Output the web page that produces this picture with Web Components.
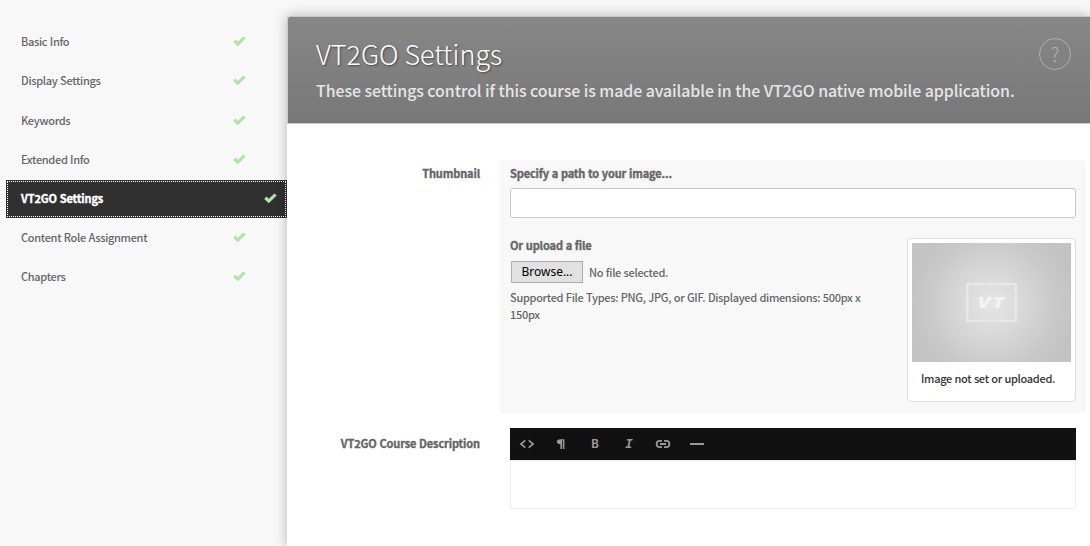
<!DOCTYPE html>
<html lang="en"><head><meta charset="utf-8"><title>VT2GO Settings</title>
<style>
body{margin:0;background:#f8f8f8;font-family:"Noto Sans CJK SC","Open Sans",sans-serif;font-size:11px;line-height:17px;color:#666;letter-spacing:-.31px;word-spacing:.4px;overflow:hidden}
</style></head><body>
<course-app></course-app>
<script>
const define=(name,html)=>{
  const t=document.createElement('template');t.innerHTML=html;
  customElements.define(name,class extends HTMLElement{
    constructor(){super();this.attachShadow({mode:'open'}).append(t.content.cloneNode(true));}
  });
};

define('check-mark',`<style>:host{display:block;width:13px;height:11px}svg{display:block}</style>
<svg width="13" height="11" viewBox="0 0 13 11"><path d="M0.2 5.9 2.5 3.6 4.8 5.8 10.5 0.4 12.7 2.5 4.8 10.3Z" fill="#b0e3a6"/></svg>`);

define('nav-item',`<style>
:host{display:flex;height:38px;padding:0 41px 0 15px;box-sizing:border-box;align-items:center;justify-content:space-between;font-weight:500;color:#666}
:host([active]){background:#303030;color:#fff;font-weight:700;letter-spacing:-.13px;-webkit-text-stroke:.35px #fff;padding-right:10px;outline:1px dotted #fff;outline-offset:-2px}
span{line-height:18px;margin-top:-2px}
check-mark{margin-top:-1px}
</style><span><slot></slot></span><check-mark></check-mark>`);

define('side-nav',`<style>:host{display:grid;align-content:start;grid-template-rows:39px 40px repeat(5,39px);box-sizing:border-box;width:287px;flex:none;padding:23px 0 0 6px}</style><slot></slot>`);

define('help-button',`<style>:host{display:flex;box-sizing:border-box;width:32px;height:32px;border:1px solid #adadad;border-radius:50%;align-items:center;justify-content:center;font-size:19px;font-weight:300;color:#b4b4b4;line-height:30px}</style><span>?</span>`);

define('page-header',`<style>
:host{display:flex;justify-content:space-between;box-sizing:border-box;height:108px;padding:21px 19px 0 28px;border:1px solid #c9c9c9;border-width:1px 0 1px 1px;background:linear-gradient(#878787,#787878);border-top-left-radius:3px}
.t{font-size:26.9px;line-height:32px;letter-spacing:0;word-spacing:0;font-weight:300;color:#fff;text-shadow:1px 1px 2px rgba(0,0,0,.45)}
.s{font-size:15.9px;line-height:24px;margin-top:9px;letter-spacing:-.065px;word-spacing:0;font-weight:500;color:#e6e6e6;white-space:nowrap}
</style><div><div class="t"><slot name="title"></slot></div><div class="s"><slot></slot></div></div><help-button></help-button>`);

define('form-row',`<style>
:host{display:grid;grid-template-columns:193px 586px;column-gap:20px}
.l{text-align:right;font-weight:700;letter-spacing:-.13px;-webkit-text-stroke:.35px #666;padding-top:var(--label-top,5px)}
</style><div class="l"><slot name="label"></slot></div><slot></slot>`);

define('text-field',`<style>:host{display:block}input{display:block;box-sizing:border-box;width:100%;height:30px;border:1px solid #c8c8c8;border-radius:3px;background:#fff;padding:0 8px;font:inherit}</style><input type="text">`);

define('file-picker',`<style>
:host{display:flex;align-items:center;gap:6px;padding-left:1px;font-weight:500}
button{box-sizing:border-box;width:72px;height:22px;padding:0;border:1px solid #adadad;background:#e1e1e1;color:#000;font:400 12px/20px "Noto Sans","Open Sans",sans-serif}
</style><button>Browse...</button><span>No file selected.</span>`);

define('image-preview',`<style>
:host{display:block;box-sizing:border-box;width:169px;height:164px;border:1px solid #ddd;border-radius:4px;background:#fff;padding:4px;color:#333;font-weight:500}
svg{display:block}
div{padding:8px 9px;white-space:nowrap}
</style><svg width="159" height="119" viewBox="0 0 159 119"><defs><radialGradient id="g" gradientUnits="userSpaceOnUse" cx="79.5" cy="61" r="84"><stop offset="0" stop-color="#e6e6e6"/><stop offset=".35" stop-color="#d9d9d9"/><stop offset=".75" stop-color="#c9c9c9"/><stop offset="1" stop-color="#c3c3c3"/></radialGradient></defs>
<rect width="159" height="119" fill="url(#g)"/><rect x="55.2" y="41.2" width="48.6" height="36.6" fill="none" stroke="#e7e7e7" stroke-width="2.5"/>
<text x="65.5" y="65.2" textLength="28" lengthAdjust="spacingAndGlyphs" letter-spacing="1" font-family="Open Sans" font-weight="800" font-style="italic" font-size="15.5" fill="#f3f3f3">VT</text></svg>
<div><slot></slot></div>`);

define('thumbnail-panel',`<style>
:host{display:block;box-sizing:border-box;height:253px;background:#f8f8f8;border-radius:3px;padding:5px 10px 0}
b{display:block;font-weight:700;letter-spacing:-.13px;-webkit-text-stroke:.35px #666}
text-field{margin-top:6px}
.row{display:flex;justify-content:space-between;margin-top:20px}
.up{width:370px;font-weight:500}
.up b{margin-top:-1px}
file-picker{margin-top:7px}
p{margin:6px 0 0;white-space:nowrap}
</style><b>Specify a path to your image...</b><text-field></text-field>
<div class="row"><div class="up"><b>Or upload a file</b><file-picker></file-picker><p>Supported File Types: PNG, JPG, or GIF. Displayed dimensions: 500px x<br>150px</p></div>
<image-preview>Image not set or uploaded.</image-preview></div>`);

define('rich-editor',`<style>
:host{display:block;width:566px;margin-left:10px;letter-spacing:0}
.bar{display:flex;height:32px;background:#111}
.bar svg{display:block;width:34px;height:32px;flex:none}
.bar span{width:34px;text-align:center;color:#999;font:700 11.5px/30px "Noto Sans CJK SC","Noto Sans",sans-serif}
.bar .i{font:italic 700 12.5px/32px "DejaVu Sans Mono","Liberation Mono",monospace}
.area{box-sizing:border-box;height:49px;border:1px solid #eee;background:#fff}
</style><div class="bar">
<svg fill="none" stroke="#999" stroke-width="1.7"><path d="M15.3 12.3 10.9 16 15.3 19.7M18.7 12.3 23.1 16 18.7 19.7"/></svg>
<svg fill="#999"><path d="M20.4 11.2V21H18.8V12.4H18V21H16.4V16.3C14.2 16.3 12.8 15.4 12.8 13.8S14.2 11.2 16.4 11.2Z"/></svg>
<span>B</span><span class="i">I</span>
<svg fill="none" stroke="#999" stroke-width="1.8"><path d="M16 12.9H13.7A3.1 3.1 0 0 0 13.7 19.1H16M18 12.9H20.3A3.1 3.1 0 0 1 20.3 19.1H18M14 16H20"/></svg>
<svg fill="#999"><rect x="10" y="15" width="14" height="2"/></svg>
</div><div class="area"></div>`);

define('settings-panel',`<style>
:host{display:block;width:803px;height:530px;margin-top:16px;background:#fff;box-shadow:0 0 13px rgba(0,0,0,.28);border-top-left-radius:3px;position:relative}
form-row{margin-top:36px}
form-row+form-row{margin-top:15px;--label-top:7px}
</style><page-header><span slot="title">VT2GO Settings</span>These settings control if this course is made available in the VT2GO native mobile application.</page-header>
<form-row><span slot="label">Thumbnail</span><thumbnail-panel></thumbnail-panel></form-row>
<form-row><span slot="label">VT2GO Course Description</span><rich-editor></rich-editor></form-row>`);

define('course-app',`<style>:host{display:flex;width:1090px;height:546px;overflow:hidden;background:#f8f8f8}</style>
<side-nav><nav-item>Basic Info</nav-item><nav-item>Display Settings</nav-item><nav-item>Keywords</nav-item><nav-item>Extended Info</nav-item><nav-item active>VT2GO Settings</nav-item><nav-item>Content Role Assignment</nav-item><nav-item>Chapters</nav-item></side-nav><settings-panel></settings-panel>`);
</script></body></html>
